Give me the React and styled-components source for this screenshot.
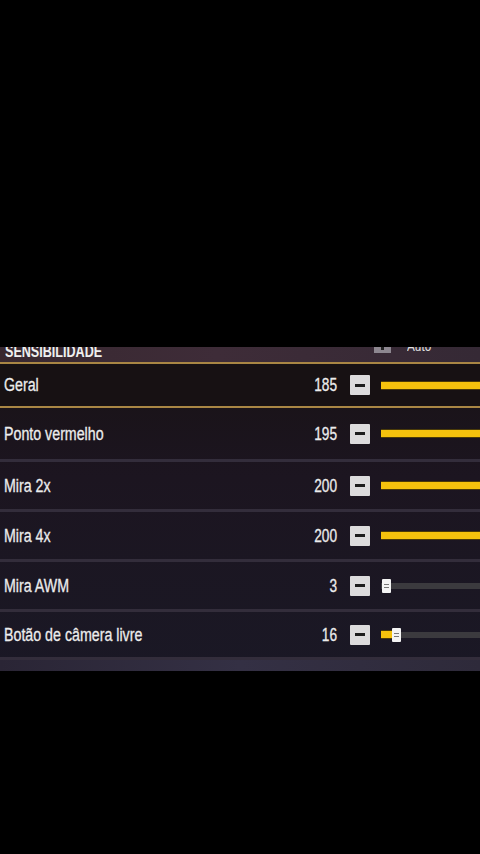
import React from 'react';
import styled, { createGlobalStyle, css } from 'styled-components';

const GlobalStyle = createGlobalStyle`
  html, body {
    margin: 0;
    padding: 0;
    background: #000;
  }
  * {
    box-sizing: border-box;
  }
`;

// the game font is a narrow sans; squeeze Liberation Sans to its width
const narrow = css`
  display: inline-block;
  transform: scaleX(${({ $sx }) => $sx || 0.84});
  transform-origin: ${({ $origin }) => $origin || 'left'} center;
`;

// --- STYLED COMPONENTS ---

const Screen = styled.div`
  width: 480px;
  height: 854px;
  background: #000;
  display: flex;
  flex-direction: column;
  padding-top: 347px;
  font-family: "Liberation Sans", Arial, sans-serif;
  overflow: hidden;
`;

const Panel = styled.section`
  display: flex;
  flex-direction: column;
  background: linear-gradient(180deg, #181214 0%, #1c1520 40%, #1a1825 100%);
`;

const Header = styled.div`
  height: 15px;
  overflow: hidden;
  display: flex;
  align-items: flex-end;
  justify-content: space-between;
  padding: 0 4px 2px 5px;
  background: linear-gradient(90deg, #382830 0%, #3e2c38 45%, #352935 100%);
`;

const Title = styled.span`
  ${narrow}
  font-size: 17px;
  line-height: 17px;
  font-weight: 700;
  color: #efefef;
  white-space: nowrap;
`;

const HeaderRight = styled.div`
  display: flex;
  align-items: flex-end;
  gap: 16px;
  margin-right: 40px;
  margin-bottom: 7px;
`;

const Toggle = styled.span`
  width: 17px;
  height: 10px;
  background: #8d8790;
  display: flex;
  align-items: center;
  justify-content: center;
  &::after {
    content: '';
    width: 3px;
    height: 3px;
    background: #222;
  }
`;

const ToggleText = styled.span`
  ${narrow}
  font-size: 14px;
  line-height: 14px;
  color: #e0e0e0;
`;

const Row = styled.div`
  display: flex;
  align-items: center;
  height: ${({ $h }) => $h}px;
  padding-left: 4px;
  background: ${({ $active }) => ($active ? '#171113' : 'transparent')};
  border-top: ${({ $active }) => ($active ? '2px solid #a98644' : 'none')};
  border-bottom: ${({ $active }) => ($active ? '2px solid #a98644' : '3px solid #332d3b')};
  box-sizing: content-box;
`;

const LabelCell = styled.div`
  flex: 1;
  white-space: nowrap;
`;

const Label = styled.span`
  ${narrow}
  font-size: 18px;
  line-height: 20px;
  color: #ececec;
  -webkit-text-stroke: 0.3px #ececec;
`;

const ValueCell = styled.div`
  width: 60px;
  display: flex;
  justify-content: flex-end;
`;

const Value = styled.span`
  ${narrow}
  font-size: 18px;
  line-height: 20px;
  color: #ececec;
  -webkit-text-stroke: 0.3px #ececec;
`;

const MinusButton = styled.span`
  width: 20px;
  height: 20px;
  margin-left: 13px;
  background: #dcdbdc;
  border-radius: 1px;
  display: flex;
  align-items: center;
  justify-content: center;
  flex-shrink: 0;
  &::after {
    content: '';
    width: 10px;
    height: 3px;
    background: #1c1c1c;
  }
`;

const SliderWindow = styled.div`
  width: 99px;
  margin-left: 11px;
  height: 16px;
  overflow: hidden;
  display: flex;
  align-items: center;
`;

const Track = styled.div`
  position: relative;
  width: 150px;
  height: 6px;
  flex-shrink: 0;
  background: #3b3a3e;
  display: flex;
`;

const Fill = styled.div`
  height: 7px;
  margin-top: -0.5px;
  background: #f5c20d;
  box-shadow: 0 0 0 1px #4a3a08;
`;

const Thumb = styled.div`
  position: absolute;
  top: -4px;
  width: 9px;
  height: 14px;
  background: #f4f4f4;
  border-radius: 1px;
  display: flex;
  flex-direction: column;
  align-items: center;
  justify-content: center;
  gap: 2px;
  &::before,
  &::after {
    content: '';
    width: 5px;
    height: 1px;
    background: #777;
  }
`;

const Footer = styled.div`
  height: 11px;
  background: linear-gradient(90deg, #2a2535 0%, #343044 50%, #2e2a3a 100%);
`;

// --- DATA ---

const MAX = 200;
const settings = [
  { label: 'Geral', value: 185, h: 42, active: true },
  { label: 'Ponto vermelho', value: 195, h: 51 },
  { label: 'Mira 2x', value: 200, h: 47 },
  { label: 'Mira 4x', value: 200, h: 47 },
  { label: 'Mira AWM', value: 3, h: 47 },
  { label: 'Botão de câmera livre', value: 16, h: 45 },
];

// --- COMPONENTS ---

const Slider = ({ value, full }) => {
  const pct = (value / MAX) * 100;
  return (
    <SliderWindow>
      <Track>
        {full ? (
          <Fill style={{ width: '100%' }} />
        ) : (
          <>
            {value > 5 && <Fill style={{ width: `${pct}%` }} />}
            <Thumb style={{ left: `calc(${pct}% - 1px)` }} />
          </>
        )}
      </Track>
    </SliderWindow>
  );
};

const SettingRow = ({ item }) => (
  <Row $h={item.h} $active={item.active}>
    <LabelCell>
      <Label $sx={0.79}>{item.label}</Label>
    </LabelCell>
    <ValueCell>
      <Value $sx={0.76} $origin="right">{item.value}</Value>
    </ValueCell>
    <MinusButton />
    <Slider value={item.value} full={item.value > 100} />
  </Row>
);

const App = () => (
  <Screen>
    <GlobalStyle />
    <Panel>
      <Header>
        <Title $sx={0.74}>SENSIBILIDADE</Title>
        <HeaderRight>
          <Toggle />
          <ToggleText>Auto</ToggleText>
        </HeaderRight>
      </Header>
      {settings.map((s) => (
        <SettingRow key={s.label} item={s} />
      ))}
      <Footer />
    </Panel>
  </Screen>
);

export default App;
